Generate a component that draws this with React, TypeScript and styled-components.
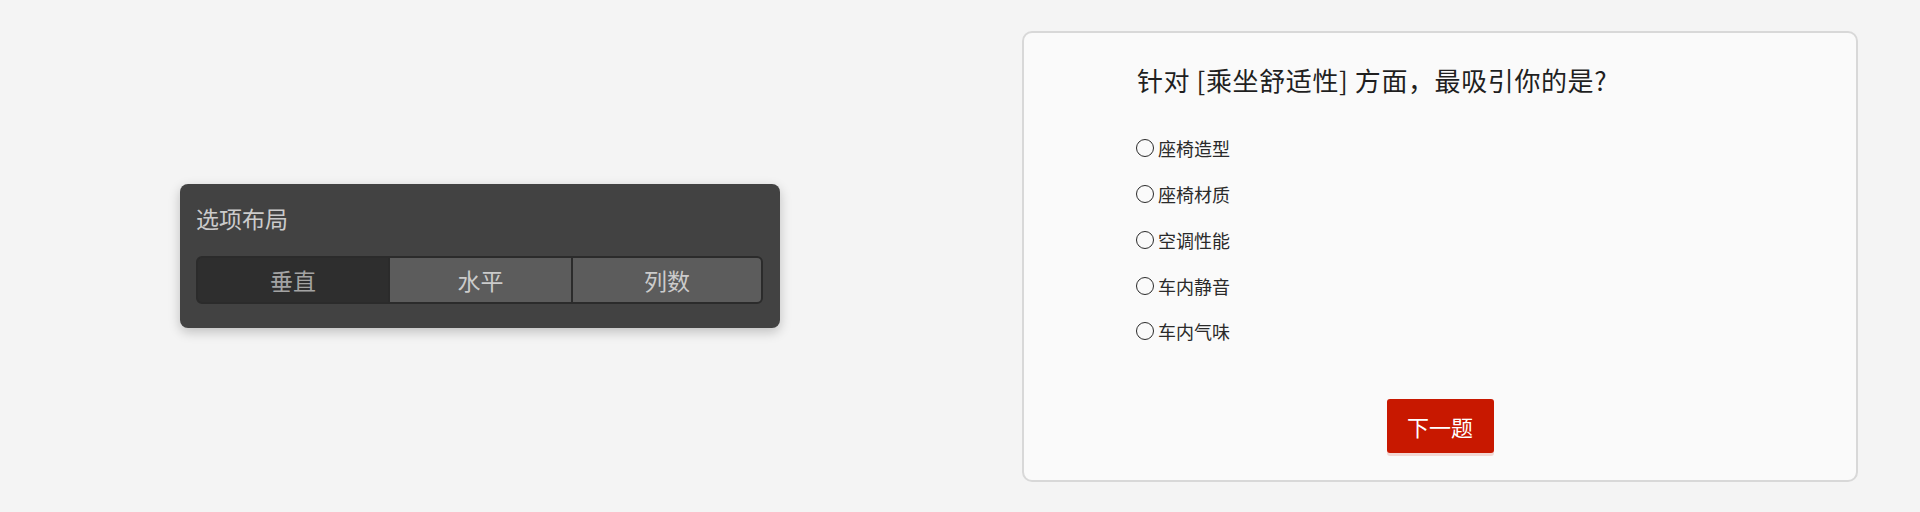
import React from "react";
import styled, { createGlobalStyle } from "styled-components";

const Global = createGlobalStyle`
  html, body { margin: 0; padding: 0; background: #f4f4f4; }
  body { font-family: "Noto Sans CJK SC", "Noto Sans", sans-serif; }
  * { box-sizing: border-box; }
`;

const Page = styled.div`
  display: grid;
  grid-template-columns: 1fr 1fr;
  height: 512px;
  width: 1920px;
  background: #f4f4f4;
`;

const Half = styled.div`
  display: flex;
  align-items: center;
  justify-content: center;
`;

const Panel = styled.div`
  width: 600px;
  height: 144px;
  background: #424242;
  border-radius: 8px;
  padding: 18px 17px 24px 16px;
  box-shadow: 0 4px 12px rgba(0, 0, 0, 0.22);
  display: flex;
  flex-direction: column;
`;

const PanelTitle = styled.div`
  font-size: 23px;
  line-height: 32px;
  color: #cbcbcb;
  margin-bottom: 22px;
`;

const Segmented = styled.div`
  display: grid;
  grid-template-columns: 190px 181px 1fr;
  height: 48px;
  border: 2px solid #2b2b2b;
  border-radius: 6px;
  overflow: hidden;
  background: #2b2b2b;
  gap: 2px;
`;

const Segment = styled.div<{ $active?: boolean }>`
  display: flex;
  align-items: center;
  justify-content: center;
  font-size: 23px;
  color: ${(p) => (p.$active ? "#a3a3a3" : "#cbcbcb")};
  background: ${(p) => (p.$active ? "#2e2e2e" : "#5c5c5c")};
`;

const Card = styled.div`
  width: 836px;
  height: 451px;
  background: #fafafa;
  border: 2px solid #d8d8d8;
  border-radius: 10px;
  padding: 29px 0 0 113px;
  display: flex;
  flex-direction: column;
`;

const Question = styled.div`
  font-size: 26px;
  letter-spacing: 0.6px;
  line-height: 35px;
  color: #1f1f1f;
  margin-bottom: 29px;
`;

const Options = styled.div`
  display: flex;
  flex-direction: column;
`;

const OptionRow = styled.label`
  display: flex;
  align-items: center;
  height: 45.75px;
  font-size: 18px;
  color: #2a2a2a;
  gap: 4px;
`;

const Radio = styled.span`
  width: 18px;
  height: 18px;
  border: 1.5px solid #2a2a2a;
  border-radius: 50%;
  display: inline-block;
  flex: none;
  margin-left: -1px;
`;

const ButtonRow = styled.div`
  display: flex;
  justify-content: center;
  margin-top: 45px;
  margin-left: -113px;
`;

const NextButton = styled.button`
  width: 107px;
  height: 54px;
  border: none;
  border-radius: 3px;
  background: #c81800;
  color: #ffffff;
  font-family: "Noto Sans CJK SC", sans-serif;
  font-size: 22px;
  box-shadow: 0 3px 0 rgba(200, 24, 0, 0.15);
  cursor: pointer;
  padding: 0;
`;

const options = ["座椅造型", "座椅材质", "空调性能", "车内静音", "车内气味"];

export default function App() {
  return (
    <>
      <Global />
      <Page>
        <Half>
          <Panel>
            <PanelTitle>选项布局</PanelTitle>
            <Segmented>
              <Segment $active>垂直</Segment>
              <Segment>水平</Segment>
              <Segment>列数</Segment>
            </Segmented>
          </Panel>
        </Half>
        <Half>
          <Card>
            <Question>针对 [乘坐舒适性] 方面，最吸引你的是?</Question>
            <Options>
              {options.map((o) => (
                <OptionRow key={o}>
                  <Radio />
                  {o}
                </OptionRow>
              ))}
            </Options>
            <ButtonRow>
              <NextButton>下一题</NextButton>
            </ButtonRow>
          </Card>
        </Half>
      </Page>
    </>
  );
}
